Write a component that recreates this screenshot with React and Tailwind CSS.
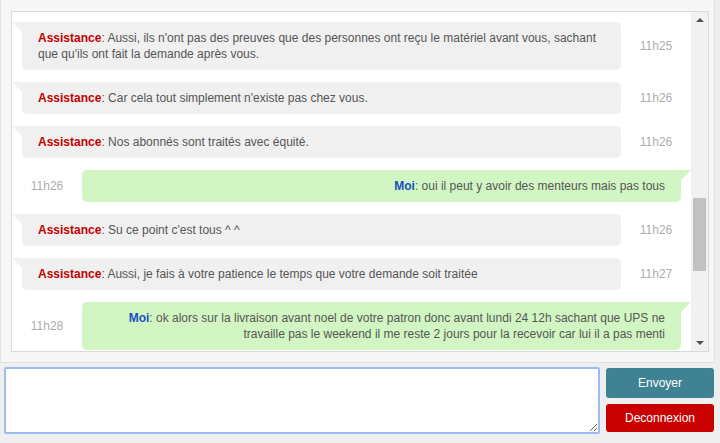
import { useState } from 'react'

const messages = [
  { from: 'them', time: '11h25', lines: ["Aussi, ils n'ont pas des preuves que des personnes ont reçu le matériel avant vous, sachant", "que qu'ils ont fait la demande après vous."] },
  { from: 'them', time: '11h26', lines: ["Car cela tout simplement n'existe pas chez vous."] },
  { from: 'them', time: '11h26', lines: ['Nos abonnés sont traités avec équité.'] },
  { from: 'me', time: '11h26', lines: ['oui il peut y avoir des menteurs mais pas tous'] },
  { from: 'them', time: '11h26', lines: ["Su ce point c'est tous ^ ^"] },
  { from: 'them', time: '11h27', lines: ['Aussi, je fais à votre patience le temps que votre demande soit traitée'] },
  { from: 'me', time: '11h28', lines: ['ok alors sur la livraison avant noel de votre patron donc avant lundi 24 12h sachant que UPS ne', 'travaille pas le weekend il me reste 2 jours pour la recevoir car lui il a pas menti'] },
]

function Lines({ lines }) {
  return lines.map((l, i) => (
    <span key={i}>
      {i > 0 && <br />}
      {l}
    </span>
  ))
}

function TheirMessage({ msg }) {
  return (
    <div className="flex items-center mb-[12px]">
      <div className="relative ml-[10px] w-[599px] shrink-0 bg-[#f0f0f0] rounded-[5px] rounded-tl-none px-[16px] py-[8px]">
        <span className="absolute left-[-10px] top-0 w-0 h-0 border-t-[10px] border-t-[#f0f0f0] border-l-[10px] border-l-transparent" />
        <p className="text-[12px] leading-[16px] text-[#555]">
          <span className="font-bold text-[#c40000]">Assistance</span>: <Lines lines={msg.lines} />
        </p>
      </div>
      <div className="w-[70px] shrink-0 text-center text-[12px] text-[#adadad]">{msg.time}</div>
    </div>
  )
}

function MyMessage({ msg }) {
  return (
    <div className="flex items-center mb-[12px]">
      <div className="w-[70px] shrink-0 text-center text-[12px] text-[#adadad]">{msg.time}</div>
      <div className="relative w-[599px] shrink-0 bg-[#d2f5c4] rounded-[5px] rounded-tr-none px-[16px] py-[8px] text-right">
        <span className="absolute right-[-10px] top-0 w-0 h-0 border-t-[10px] border-t-[#d2f5c4] border-r-[10px] border-r-transparent" />
        <p className="text-[12px] leading-[16px] text-[#555]">
          <span className="font-bold text-[#1550c0]">Moi</span>: <Lines lines={msg.lines} />
        </p>
      </div>
    </div>
  )
}

function FakeScrollbar() {
  return (
    <div className="w-[17px] shrink-0 bg-[#f1f1f1] flex flex-col items-center justify-between py-[6px]">
      <span className="w-0 h-0 border-l-[4px] border-r-[4px] border-b-[4px] border-l-transparent border-r-transparent border-b-[#505050]" />
      <div className="flex-1 w-full flex flex-col pt-[176px] pb-[60px] px-[2px]">
        <div className="w-full h-[73px] bg-[#c1c1c1]" />
      </div>
      <span className="w-0 h-0 border-l-[4px] border-r-[4px] border-t-[4px] border-l-transparent border-r-transparent border-t-[#505050]" />
    </div>
  )
}

export default function App() {
  const [text, setText] = useState('')

  return (
    <div className="w-[720px] h-[443px] bg-[#efefef] overflow-hidden" style={{ fontFamily: '"Liberation Sans", Arial, sans-serif' }}>
      <div className="w-[715px] h-[363px] bg-[#f7f7f7] border-l border-r border-b border-[#e2e2e2] pt-[11px] pl-[10px]">
        <div className="w-[698px] h-[341px] bg-white border border-[#d9d9d9] flex">
          <div className="flex-1 overflow-hidden pt-[10px]">
            {messages.map((m, i) =>
              m.from === 'me' ? <MyMessage key={i} msg={m} /> : <TheirMessage key={i} msg={m} />
            )}
          </div>
          <FakeScrollbar />
        </div>
      </div>

      <div className="flex gap-[6px] pl-[4px] pt-[4px]">
        <textarea
          autoFocus
          value={text}
          onChange={e => setText(e.target.value)}
          className="w-[596px] h-[67px] bg-white border-2 border-[#9dbdf2] rounded-[2px] outline-none px-[2px] py-[1px] text-[13px] text-[#333]"
        />
        <div className="flex flex-col gap-[6px] pt-[1px]">
          <button className="w-[108px] h-[30px] rounded-[3px] bg-[#3f8294] text-white text-[12px]">
            Envoyer
          </button>
          <button className="w-[108px] h-[28px] rounded-[3px] bg-[#c80000] text-white text-[12px]">
            Deconnexion
          </button>
        </div>
      </div>
    </div>
  )
}
